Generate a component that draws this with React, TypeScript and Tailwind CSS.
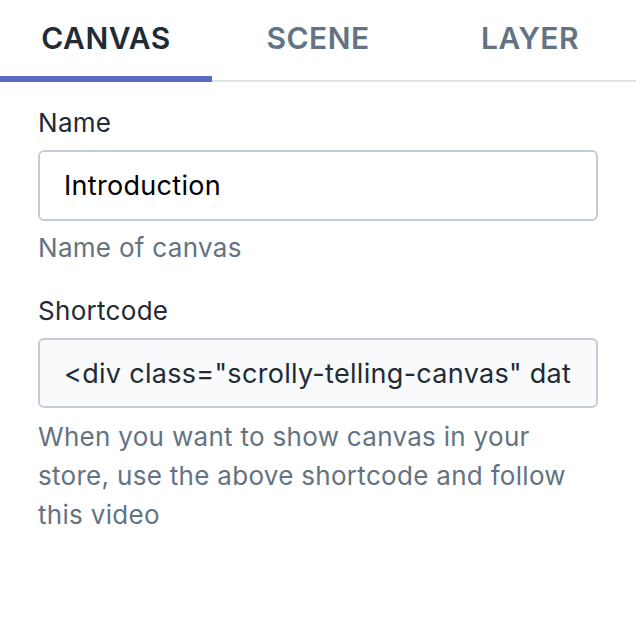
import React from 'react'

const tabs = ['CANVAS', 'SCENE', 'LAYER']

export default function App() {
  return (
    <div
      className="w-[636px] h-[634px] bg-white text-[#212b36]"
      style={{ fontFamily: 'Inter, "Noto Sans", sans-serif' }}
    >
      {/* tabs */}
      <div className="flex border-b-2 border-[#dfe3e8]">
        {tabs.map((t, i) => (
          <div
            key={t}
            className={
              i === 0
                ? 'flex-1 h-[82px] -mb-[2px] border-b-[6px] border-[#5c6ac4] flex items-center justify-center text-[30px] leading-[36px] tracking-[0.5px] font-semibold text-[#212b36]'
                : 'flex-1 h-[82px] -mb-[2px] border-b-[6px] border-transparent flex items-center justify-center text-[30px] leading-[36px] tracking-[0.5px] font-semibold text-[#637381]'
            }
          >
            {t}
          </div>
        ))}
      </div>

      <div className="px-[38px] pt-[21px] text-[26px] leading-[39px] tracking-[0.3px]">
        <div>
          <label className="block mb-2">Name</label>
          <input
            readOnly
            value="Introduction"
            className="w-full h-[71px] px-6 border-2 border-[#c4cdd5] rounded-md bg-white text-black text-[27px] tracking-[0.3px] outline-none"
          />
          <div className="mt-[7px] text-[#637381]">Name of canvas</div>
        </div>

        <div className="mt-6">
          <label className="block mb-2">Shortcode</label>
          <input
            readOnly
            value={'<div class="scrolly-telling-canvas" data-canvas-id="1"></div>'}
            className="w-full h-[70px] px-6 border-2 border-[#c4cdd5] rounded-md bg-[#f9fafb] text-[#212b36] text-[27px] tracking-[0.3px] outline-none"
          />
          <div className="mt-[9px] text-[#637381]">
            When you want to show canvas in your store, use the above shortcode and follow this video
          </div>
        </div>
      </div>
    </div>
  )
}
